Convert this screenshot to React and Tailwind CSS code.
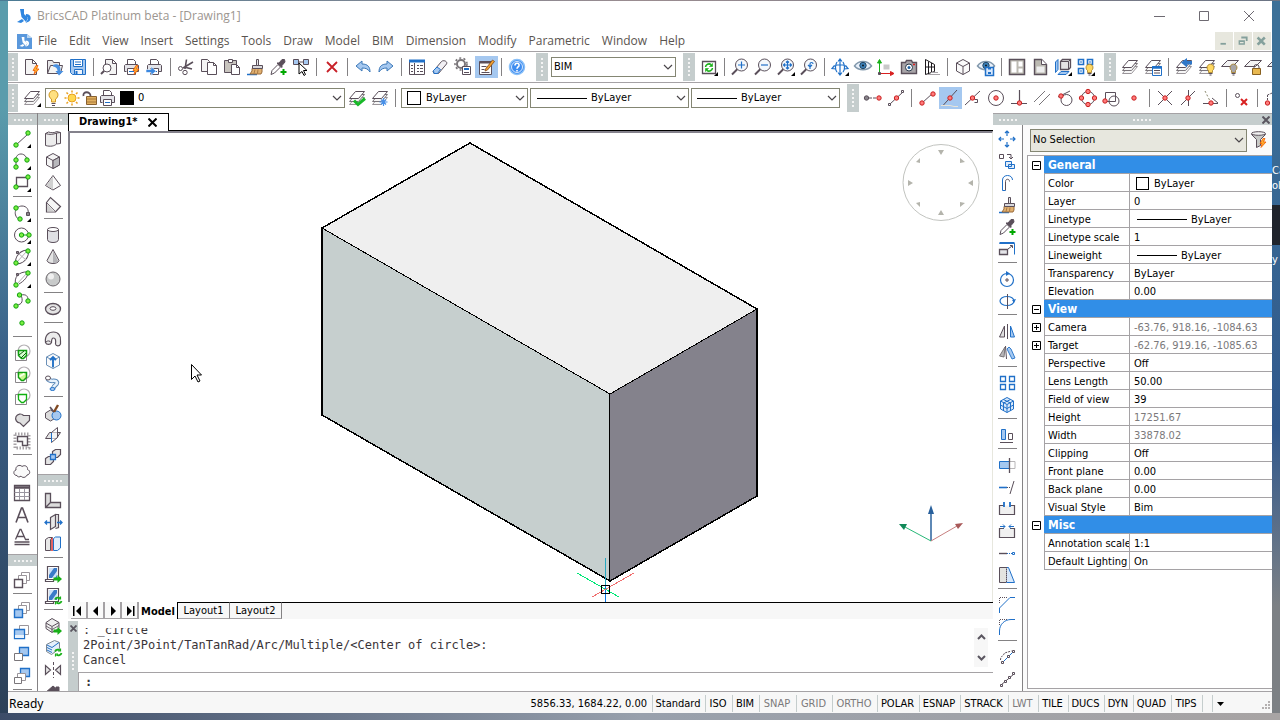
import { useState } from "react";

const INK = "#5a4f5a";
const BLUE = "#2070c8";
const SKY = "#a5c8f0";

// ---- small parts shared by many icons ----

const Green = ({ x, y }) => <circle cx={x} cy={y} r="2.2" fill="#7bef42" stroke="#10a010" />;
const Red = ({ x, y }) => <circle cx={x} cy={y} r="2.2" fill="#ff7b7b" stroke="#c82020" />;
const Corner = () => <path d="M20 16v4h-4z" fill="#000" stroke="none" />;
const Bolt = () => <path d="M15 9.500l-3 5h2l-1 4 5-5.500h-2.500l1.500-3.500z" fill="#ffb030" stroke="#f05a00" strokeWidth=".8" />;
const Page = () => <path d="M4.5 3.500h7l4 4v11h-11zM11.500 3.500v4h4" fill="#f4f4f4" />;
const Printer = () => (
  <>
    <path d="M6.500 8V3.500h6l2 2V8" fill="#fff" />
    <path d="M3.500 15.500v-6l1-1h12l1 1v6h-3" fill="#e4e4e8" />
    <path d="M3.500 15.500h2" />
    <path d="M6.500 12.500h8v6h-8z" fill="#fff" />
    <path d="M8 15.500h5" stroke={BLUE} />
  </>
);
const Sheets = () => (
  <>
    <path d="M3.500 17.500l6-7h9l-6 7z" fill="#f6f6f6" stroke="#9a959a" />
    <path d="M3.500 14.500l6-7h9l-6 7z" fill="#f6f6f6" stroke="#7a757a" />
    <path d="M3.500 11.500l6-7h9l-6 7z" fill="#fff" />
  </>
);
const OneSheet = () => <path d="M2.500 10.500l6-6h11l-6 6z" fill="#f4f4f4" />;
const Lens = ({ children }) => (
  <>
    <path d="M8.500 13L3 18.500" strokeWidth="2" />
    <circle cx="12.500" cy="9" r="6" fill="#f4f8fc" />
    <g stroke={BLUE} strokeWidth="1.200">{children}</g>
  </>
);
const Brush = () => (
  <>
    <path d="M3 18.500h10" stroke={BLUE} strokeWidth="1.500" />
    <path d="M8 12.500h10v3.500l-1 2H6l2-3z" fill="#e0b070" stroke="#9a6a38" />
    <path d="M11 13.500l-1 4M14 13.500l-.5 4" stroke="#9a6a38" strokeWidth=".8" />
    <path d="M8.500 9.500h10v3h-10z" fill="#d8d8dc" />
    <path d="M12.500 3.500h2v6h-2z" fill="#e8e8e8" />
  </>
);
const Dropper = () => (
  <>
    <path d="M4 18.500l1-4 6-6 2.500 2.500-6 6z" fill="#fff" />
    <path d="M10 7l2 0 3-3.500 2.500 0 .5 2.500-3 3.500v2z" fill={INK} />
    <path d="M16.500 13v6M13.500 16h6" stroke="#00a800" strokeWidth="2" />
  </>
);
const Cube = ({ fill = "#fafafa" }) => (
  <>
    <path d="M11 3.500l6.500 3.500v8L11 18.500 4.500 15V7z" fill={fill} />
    <path d="M4.500 7L11 10.500 17.500 7M11 10.500v8" />
  </>
);
const Bulb = ({ fill }) => (
  <>
    <path d="M12.500 14.500a3.500 3.500 0 1 1 4 0v2h-4z" fill={fill} stroke="#a07820" strokeWidth=".8" />
    <path d="M12.500 17.500h4M13.500 19h2" strokeWidth="1.200" />
  </>
);
const EyeShape = () => (
  <>
    <path d="M2.500 10c4-6 13-6 17 0-4 5-13 5-17 0z" fill="#e8f0fa" stroke="#8298ac" strokeWidth="1.500" />
    <circle cx="11" cy="9.500" r="3.200" fill="#3c80b8" stroke="#204868" />
    <circle cx="11" cy="9.500" r="1" fill="#101820" stroke="none" />
  </>
);
const Recycle = () => (
  <g stroke="#18b018" strokeWidth="1.800">
    <path d="M13 14.500a3 3 0 0 1 5-1M19.500 16a3 3 0 0 1-5 1.500" />
    <path d="M18.500 11.500v2.500H16M13.500 19.500v-2.500H16" strokeWidth="1.200" />
  </g>
);
const GreenArrow = () => <path d="M11.500 14.500h4v-2.500l4.500 4-4.500 4v-2.500h-4z" fill="#18b018" stroke="none" />;
const WindowFrame = () => (
  <>
    <path d="M5.500 3.500h11v13h-11z" fill="#fff" strokeWidth="1.200" />
    <path d="M7 5h8v10H7z" fill="#3a7ac8" stroke="none" />
    <path d="M7 5h5l-5 7zM15 8v4l-2 3h-3z" fill="#cfe2f8" stroke="none" />
    <path d="M3.500 16.500h8v2h-8z" fill="#fff" strokeWidth="1.200" />
  </>
);
const Squares = ({ front, back }) => (
  <>
    <path d="M10.500 3.500h8v8h-8z" fill={back ? SKY : "#fff"} stroke={back ? BLUE : "#9a959a"} />
    <path d="M7.500 6.500h8v8h-8z" fill="#fff" stroke="#9a959a" />
    <path d="M3.500 10.500h8v8h-8z" fill={front ? SKY : "#fff"} stroke={front ? BLUE : INK} strokeWidth="1.400" />
  </>
);
const HatchFrame = ({ children }) => (
  <>
    <circle cx="13" cy="9" r="6" stroke="#b4b0b4" strokeWidth="1.200" />
    <path d="M4.500 8.500h11v10h-11z" stroke="#8a868a" />
    {children}
  </>
);

const ICONS = {
  new: <><Page /><Bolt /></>,
  open: (
    <>
      <path d="M3.500 17.500v-13h5l1 2h6v3" fill="#e8e8ea" />
      <path d="M3.500 17.500l3-8h12l-2 8z" fill="#f4f4f4" />
      <path d="M9 9c5-2 8 1 7.500 6h3l-4.500 4.500-3.500-4.500h2c0-2-1-4-4.500-4.500z" fill="#4a90e0" stroke="none" />
    </>
  ),
  save: (
    <>
      <path d="M3.500 3.500h15v15h-13l-2-2z" fill={SKY} stroke={BLUE} />
      <path d="M6.500 3.500h9v7h-9z" fill="#fff" stroke={BLUE} />
      <path d="M7.500 13.500h8v5h-8z" fill="#eef4fc" stroke={BLUE} />
      <path d="M8 6h6M8 8.500h6" stroke={BLUE} />
      <path d="M9.500 15v3" stroke={BLUE} strokeWidth="2" />
    </>
  ),
  preview: <><path d="M7.500 10V3.500h7l4 4v11h-7M14.500 3.500v4h4" fill="#f4f4f4" /><circle cx="9" cy="12" r="4" fill="#fff" /><path d="M6 15l-3 3" strokeWidth="2" /></>,
  print: <><Printer /><Bolt /></>,
  export: <><Printer /><path d="M2 13.500h5v-3l5 4.500-5 4.500v-3H2z" fill="#3c88e0" stroke="#fff" strokeWidth=".6" /></>,
  cut: <><path d="M11.500 3.500L10 13M18 6L8 12" strokeWidth="1.600" /><circle cx="5.500" cy="12.500" r="2" /><circle cx="10" cy="16.500" r="2.200" /><path d="M11 11.500l6 1.500" strokeWidth="1.600" /></>,
  copy: <><path d="M3.500 3.500h6l2 2v10h-8z" fill="#f4f4f4" /><path d="M9.500 6.500h6l3 3v9h-9zM15.500 6.500v3h3" fill="#fff" /></>,
  paste: <><path d="M3.500 4.500h12v12h-12z" fill="#c8c4be" /><path d="M7.500 3.500h4v3h-4z" fill="#fff" /><path d="M10.500 8.500h5l3 3v7h-8zM15.500 8.500v3h3" fill="#fff" /></>,
  brush: <Brush />,
  dropper: <Dropper />,
  pick: <><path d="M3.500 3.500h5v5h-5zM13.500 3.500h5v5h-5z" fill={SKY} /><path d="M8.500 6h5" /><path d="M9 7v11l3-2.500 2 4 1.500-1-2-4h3.500z" fill="#fff" stroke="#000" /></>,
  erase: <path d="M6 6l10 10M16 6L6 16" stroke="#c82028" strokeWidth="1.800" />,
  undo: <path d="M4 10l6-5v3c6 0 8 3 8 8-2-3-4-4-8-4v3z" fill={SKY} stroke="#3c78b8" />,
  redo: <path d="M18 10l-6-5v3c-6 0-8 3-8 8 2-3 4-4 8-4v3z" fill={SKY} stroke="#3c78b8" />,
  properties: <><path d="M3.500 4.500h15v14h-15z" fill="#fff" /><path d="M3 5h16" stroke={BLUE} strokeWidth="3" /><path d="M8.500 7v11" /><path d="M5 9.500h2M5 12.500h2M5 15.500h2M11 9.500h2m1 0h3M11 12.500h2m1 0h3M11 15.500h2m1 0h3" /></>,
  eraser: <><path d="M4 15.500l8.500-10c2-2 6.500 0 5 2.500l-8 9.500H5z" fill="#f2f0f4" /><path d="M4.500 14.500l3.500-3.500 3.500 2.500-3 4H5z" fill={SKY} stroke={BLUE} /></>,
  gear: <><circle cx="9" cy="8" r="4" stroke="#7a767a" strokeWidth="2" fill="#fff" /><circle cx="9" cy="8" r="6" stroke="#7a767a" strokeWidth="1.600" strokeDasharray="2 2.300" /><path d="M10.500 10.500h8v8h-8z" fill="#fff" /><path d="M12 13h5" stroke={BLUE} strokeWidth="2" /><path d="M12 16.500h5" /></>,
  edit: <><path d="M4.500 5.500h12v13h-12z" fill="#fff" /><path d="M4.500 6.500h12" strokeWidth="2" /><path d="M6.500 10.500h5M6.500 13.500h3M6.500 16.500h8" /><path d="M10.500 13l7-9 2 1.500-7 8.500-2.500 1z" fill="#f0a030" stroke="#804818" strokeWidth=".8" /></>,
  help: <><circle cx="11" cy="11" r="7.500" fill="#3c8cf0" stroke="#8ac0f8" strokeWidth="1.500" /><circle cx="11" cy="11" r="5.500" stroke="#fff" strokeWidth=".8" /><path d="M9 9.500c0-3 4.500-3 4 0-.3 1.500-2 1.500-2 3.300M11 14v1.500" stroke="#fff" strokeWidth="1.600" /></>,

  regen: <><path d="M4.500 5.500h13v12h-13z" fill="#fff" strokeWidth="1.300" /><path d="M7.500 11a3.500 3.500 0 0 1 5.500-2.500M14.500 12a3.500 3.500 0 0 1-5.500 2.500" stroke="#18b018" strokeWidth="1.600" /><path d="M14.500 7.500v3h-3zM7.500 15.500v-3h3z" fill="#18b018" stroke="#18b018" strokeWidth=".6" /><Corner /></>,
  zoomIn: <Lens><path d="M9 9h7M12.500 5.500v7" /></Lens>,
  zoomOut: <Lens><path d="M9 9h7" /></Lens>,
  zoomAll: <><Lens><path d="M8.500 9h8M12.500 5v8M10 7.500L8.500 9l1.500 1.500M15 7.500L16.500 9 15 10.500M11 6.500L12.500 5 14 6.500M11 11.500l1.500 1.500 1.500-1.500" /></Lens><Corner /></>,
  zoomPrev: <Lens><path d="M12 13V8c0-2 3-2 3 0M10 9l2 2 2-2" /></Lens>,
  orbit: <><g stroke={BLUE} strokeWidth="1.200"><path d="M11 3v16M3 12.500c3-5 13-5 16 0M9 5.500L11 3l2 2.500M9 16.500l2 2.500 2-2.500M5.500 9.500L3 12.500l4 .5M16.500 9.500l2.500 3-4 .5M8 6c-2 3-2 8 0 10M14 6c2 3 2 8 0 10" /></g><Corner /></>,
  eye: <EyeShape />,
  ucs: <><path d="M8.500 8.500h6v5h-6z" fill="#c8c8c8" stroke="none" /><path d="M4.500 16V5M2.500 7l2-3.500L6.500 7z" stroke="#18b018" fill="#18b018" /><path d="M6 17.500h12M15.500 15.500l3.500 2-3.500 2z" stroke="#d82020" fill="#d82020" /><path d="M3.500 16.500h2v2h-2z" fill={INK} /></>,
  camera: <><path d="M3.500 6.500h4l1-2h5l1 2h4v11h-15z" fill="#a8a4a8" strokeWidth="1.400" /><circle cx="11" cy="11.500" r="3.500" fill="#fff" stroke="#283848" /><circle cx="11" cy="11.500" r="1.500" fill="#2060a0" stroke="none" /><path d="M15 8.500h2" stroke="#e02020" strokeWidth="1.500" /></>,
  frustum: <><path d="M4.500 3.500v15l9-3v-7zM4.500 11h9M7.500 5.500v12M10.500 7v9.500" stroke="#1c181c" /><path d="M6 18.500h13M10 16.500h7" stroke="#a8a4a8" /></>,
  cube: <Cube />,
  eyeSave: <><EyeShape /><path d="M10.500 11.500h8v8h-8z" fill="#d8e8fc" stroke={BLUE} strokeWidth="1.500" /><path d="M13 12.500h3M13 17h3" stroke={BLUE} strokeWidth="2" /></>,
  viewports: <><path d="M3.500 3.500h15v15h-15z" fill="#bcbab2" strokeWidth="1.500" /><path d="M5.500 5.500h5v11h-5zM12.500 5.500h4v5h-4zM12.500 12.500h4v4h-4z" fill="#fff" stroke="none" /></>,
  layout: <><path d="M5.500 3.500h7l5 5v10h-12z" fill="#bcbab2" strokeWidth="1.400" /><path d="M12.500 3.500v5h5" fill="#fff" /><path d="M7.500 10.500h8v6h-8z" fill="#eee" stroke="none" /></>,
  sections: <><path d="M8.500 5.500l2-2h8v8l-2 2h-8z" fill="#e4e2e4" strokeWidth="1.300" /><path d="M8.500 5.500h8v8M16.500 5.500l2-2" /><path d="M3.500 6l2.500-2.500v10l-2.500 3z" fill={SKY} stroke={BLUE} /><path d="M6 18.500l3-3h8l-3 3z" fill={SKY} stroke={BLUE} /><Corner /></>,
  gridLight: <><path d="M3.500 3.500h5v5h-5zM12.500 3.500h5v5h-5zM3.500 12.500h5v5h-5z" fill="#fff" stroke={BLUE} strokeWidth="1.600" /><path d="M5 6h2M14 6h2M5 15h2" stroke={BLUE} /><Bulb fill="#ffd860" /><Corner /></>,

  layers: <Sheets />,
  layersDrop: <><Sheets /><Corner /></>,
  layerProps: <><Sheets /><path d="M10.500 10.500h9v9h-9z" fill="#fff" stroke={BLUE} /><path d="M10 11.500h10" stroke={BLUE} strokeWidth="2.500" /><path d="M12 14.500h6M12 17h6" /></>,
  layerPrev: <><Sheets /><path d="M19 9.500h-5v3l-6-5 6-4.500v3h5z" fill="#3078c8" stroke="none" transform="translate(0 -1)" /></>,
  layerOn: <><Sheets /><Bulb fill="#ffd860" /></>,
  layerOff: <><OneSheet /><Bulb fill="#a8a6a8" /></>,
  layerLock: <><OneSheet /><path d="M12 13v-2a2.500 2.500 0 0 1 5 0v2" /><path d="M10.500 12.500h8v6h-8z" fill="#e8b850" stroke="#886020" /></>,
  layerUnlock: <OneSheet />,
  layerCheck: <><Sheets /><path d="M8 13.500l4 4 7-6" stroke="#18b828" strokeWidth="3" /></>,
  layerFreeze: <><Sheets /><path d="M14.500 11v8M10.500 15h8M12 12.500l5 5M17 12.500l-5 5" stroke="#4890e8" strokeWidth="1.200" /></>,

  snapFrom: <><path d="M7 11h9" strokeDasharray="3 1" /><circle cx="4.500" cy="11" r="2.200" fill="#88848a" /><Red x={17} y={11} /></>,
  snapMid2: <><path d="M5 17L18 5" /><path d="M3.500 16.500h2v2h-2zM16.500 3.500h2v2h-2z" fill="#fff" /><Red x={11.500} y={11} /></>,
  snapEnd: <><path d="M6 16L17 6" /><Red x={6} y={16} /><Red x={17} y={7} /></>,
  snapMid: <><path d="M4 18.500L18 3" /><Red x={11} y={11} /><path d="M2 18.500h9l4 1h4" stroke="#e8e4d8" /></>,
  snapNear: <><path d="M3 18L18 4" /><path d="M12.500 12.500h3v3h-3" /><Red x={10.500} y={11} /></>,
  snapCenter: <><circle cx="11" cy="11" r="7.500" /><Red x={11} y={11} /></>,
  snapPerp: <><path d="M11.500 3v12M3 16.500h16" strokeWidth="1.200" /><Red x={11.500} y={16} /></>,
  snapParallel: <path d="M3 15L14 4M8 18L19 7" stroke="#7a767a" />,
  snapTangent: <><circle cx="12.500" cy="13" r="5.500" /><path d="M4 10l12-6" /><Red x={7} y={9} /></>,
  snapQuad: <><circle cx="11" cy="11" r="6.500" /><Red x={11} y={4.500} /><Red x={11} y={17.500} /><Red x={4.500} y={11} /><Red x={17.500} y={11} /></>,
  snapIns: <><path d="M5.500 5.500h10v9h-10z" /><circle cx="14" cy="14" r="5" /><Red x={5} y={14} /></>,
  snapNode: <Red x={11} y={11} />,
  snapInt: <><path d="M4 4l14 14M18 4L4 18" /><Red x={11} y={11} /></>,
  snapApp: <><path d="M11.500 3v16M4 18L18 4" /><Red x={11} y={11} /></>,
  snapExt: <><path d="M5 4l5 10" strokeDasharray="2 2" stroke="#88866a" /><path d="M3 16.500h15M12 11l6 5" /><Red x={11} y={16} /></>,
  snapOff: <><circle cx="6.500" cy="8.500" r="2" /><path d="M10 12l6 6M16 12l-6 6" stroke="#d82020" strokeWidth="2" /></>,
  snapTrack: <><path d="M5.500 8l7-3M5.500 8v8" strokeDasharray="2 1" /><Red x={5.500} y={16} /></>,

  line: <><path d="M5 17L17 6" /><Green x={5} y={17} /><Green x={17} y={5} /><Corner /></>,
  polyline: <><path d="M5 17v-8c0-7 11-7 11 2" /><Green x={5} y={17} /><Green x={5} y={10} /><Green x={16} y={10} /><Corner /></>,
  rect: <><path d="M5.500 5.500h11v9h-11z" strokeWidth="1.300" /><Green x={5} y={15} /><Green x={17} y={5} /><Corner /></>,
  arc: <><path d="M9 18c-8-4-5-14 2-14 5 0 7 4 6 8" /><Green x={5} y={6} /><Green x={9} y={17} /><path d="M15.500 10.500h3v3h-3z" fill="#8a868a" /><Corner /></>,
  circle: <><circle cx="10.500" cy="11" r="7" /><path d="M11 11h7" stroke="#10a010" /><Green x={10.500} y={11} /><Green x={18} y={11} /><Corner /></>,
  ellipse: <><ellipse cx="11" cy="11" rx="8" ry="4.500" transform="rotate(-48 11 11)" /><path d="M6 16l10-11M7 7l8 7" stroke="#b4b0b4" /><Green x={5} y={17} /><Green x={17} y={5} /><path d="M5.500 5.500h2v2h-2z" fill="#8a868a" /><Corner /></>,
  ellipseArc: <><path d="M17 4c-9-1-15 6-12 13M17 4c0 5-4 9-9 12" /><path d="M6 16L16 5" stroke="#b4b0b4" /><Green x={5} y={17} /><Green x={17} y={5} /><path d="M5.500 5.500h2v2h-2z" fill="#8a868a" /><Corner /></>,
  spline: <><path d="M5 15c7 0 7-5 5-10 5-1 7 1 7 5" /><Green x={5} y={16} /><Green x={8.500} y={5} /><Green x={17} y={11} /></>,
  point: <Green x={11} y={11} />,
  hatch: <HatchFrame><path d="M7.500 8.500h8v5l-3 3h-2l-3-3z" fill="#d8ffd0" stroke="#10a010" strokeWidth="1.500" /><path d="M8 13l5-4M10 16l5-5" stroke="#106010" /></HatchFrame>,
  gradient: <HatchFrame><path d="M7.500 8.500h8v5l-3 3h-2l-3-3z" fill="#c8f890" stroke="#10a010" strokeWidth="1.500" /><path d="M8.500 12.500l5-3" stroke="#f4ffe8" strokeWidth="2" /></HatchFrame>,
  boundary: <HatchFrame><path d="M7.500 8.500h8v5l-3 3h-2l-3-3z" fill="#fff" stroke="#10b010" strokeWidth="1.300" /></HatchFrame>,
  region: <path d="M12.500 7.500h6v5l-6 6-3.500-3.500a4.500 4.500 0 1 1 3.500-7.500z" fill="#e0e0e0" strokeWidth="1.200" />,
  wipeout: <><path d="M4 4h14v14H4z" strokeDasharray="1.500 1.500" stroke="#a8a4a8" strokeWidth="3" /><path d="M6.500 6.500h10v9h-5v-4h-5z" fill="#f8f8f8" strokeWidth="1.400" /></>,
  cloud: <path d="M6 15.500c-4 0-4-5-1-5.500-1-4 4-6 6-3.500 3-2 6 0 5.500 3 3 1 3 5-.5 5.500-1 3-5 3-6 1-1 1.500-4 1-4-.5z" fill="#fafafa" />,
  table: <><path d="M3.500 3.500h15v15h-15z" fill="#fff" strokeWidth="1.300" /><path d="M3.500 5.500h15" strokeWidth="2.500" /><path d="M3.500 10.500h15M3.500 14.500h15M8.500 7v11M13.500 7v11" stroke="#9a96a0" /></>,
  text: <path d="M5 18.500L10.500 4h1L17 18.500M7 13.500h8" strokeWidth="1.600" />,
  mtext: <path d="M4.500 13.500L9 3.500h1l4.500 10M6 10.500h7M14 13.500h4M3.500 16h15M3.500 18.500h15" strokeWidth="1.300" />,
  order: <Squares />,
  orderFront: <Squares front />,
  orderAbove: <><path d="M8.500 4.500h9v9h-9z" stroke="#9a959a" /><path d="M3.500 8.500h10v9h-10z" fill={SKY} stroke={BLUE} strokeWidth="1.300" /><path d="M4 15.500h9" stroke="#e8f2fc" strokeWidth="3" /></>,
  orderUnder: <><path d="M8.500 4.500h9v8h-9z" fill={SKY} stroke={BLUE} strokeWidth="1.300" /><path d="M3.500 10.500h8v7h-8z" fill="#fff" stroke="#7a767a" /></>,
  orderBack: <><path d="M9.500 3.500h9v8h-9z" fill={SKY} stroke={BLUE} strokeWidth="1.300" /><path d="M6.500 8.500h8v7h-8z" fill="#fff" stroke="#9a959a" /><path d="M3.500 12.500h7v6h-7z" fill="#fff" stroke="#7a767a" /></>,

  polysolid: <><path d="M3.500 5.500l3-1.500c3 1 6 1 8-.5l4 1v11l-4 .5c-2 2-6 3-11 1.500z" fill="#ececec" /><path d="M3.500 5.500c4 1.500 8 1 11-.5l4-.5M14.500 5v11" /></>,
  solidBox: <><Cube fill="#f4f4f4" /><path d="M11 10.500L17.500 7v8L11 18.500z" fill="#b8b8bc" /></>,
  pyramid: <><path d="M11 3.500l7.500 10-7.500 4.500-7.500-4.500z" fill="#fafafa" /><path d="M11 4v13.500l-6.500-4z" fill="#d0d0d0" stroke="none" /></>,
  wedge: <><path d="M4.500 8.500l4-5 10 9-5 5.500h-9z" fill="#f6f6f6" strokeWidth="1.200" /><path d="M4.500 8.500l9 9" strokeWidth=".8" /><path d="M5 10l7.500 7.500H5z" fill="#d0d0d0" stroke="none" /></>,
  cylinder: <><path d="M5.500 5.500v10c0 4 11 4 11 0v-10" fill="#e0e0e4" /><ellipse cx="11" cy="5.500" rx="5.500" ry="2" fill="#fff" /></>,
  cone: <><path d="M11 3.500l6 11c-1 4-11 4-12 0z" fill="#e4e4e4" /><path d="M11 5v12c3 0 5-1 5-2z" fill="#b4b4b8" stroke="none" /></>,
  sphere: <><circle cx="11" cy="11" r="7" fill="#c8caca" stroke="#6a656a" /><circle cx="9" cy="8.500" r="3" fill="#f0f0f0" stroke="none" /></>,
  torus: <><ellipse cx="11" cy="11" rx="7.500" ry="5.500" fill="#e4e4e4" strokeWidth="1.300" /><ellipse cx="11" cy="10.500" rx="3" ry="1.800" fill="#fff" /></>,
  sweep: <><path d="M3.500 14.500c-1-7 3-10.500 8-10.500 5 0 7.500 4 7 9v3c-1 2.500-4.500 2.500-5 0 .5-4 0-6-2-6s-2 2-2 4.500c-1 2.500-5 2.500-6 0z" fill="#ececec" strokeWidth="1.200" /><path d="M4 14c1.500-1.500 4-1.500 5 .5" /></>,
  extrude: <><g stroke="#6a90b8"><Cube /></g><path d="M11 17V7M8 10l3-3 3 3" stroke={BLUE} strokeWidth="1.800" /></>,
  loft: <><path d="M5.500 6.500c3 5 8 0 9.500 4 0 3-3 2-4 6" stroke="#5a88b8" strokeWidth="4.500" /><path d="M5.500 6.500c3 5 8 0 9.500 4 0 3-3 2-4 6" stroke="#e8f2fc" strokeWidth="2.500" /><ellipse cx="6" cy="6" rx="2.500" ry="2" fill="#fff" /><ellipse cx="10.500" cy="17" rx="2.500" ry="1.500" fill={SKY} stroke={BLUE} /></>,
  subtract: <><path d="M3.500 11l5-3 5 3v5l-5 3-5-3z" fill="#dcdcdc" /><circle cx="14.500" cy="13.500" r="4.500" fill={SKY} stroke={BLUE} /><path d="M8 5l4 5" strokeWidth="1.600" /><path d="M16 3l-4 7" stroke="#804820" strokeWidth="2.400" /></>,
  slice: <><path d="M3.500 14.500l4-6h11l-4 6z" fill="#e4e4e4" /><path d="M9.500 8.500l6-5v10l-6 5z" fill="#fff" fillOpacity=".6" /><path d="M9.500 9v9" stroke={BLUE} /></>,
  union: <><path d="M3.500 12.500l3-2h5v5l-3 3h-5zM10.500 5.500l3-2h5v5l-3 3h-5z" fill="#e4e4e4" strokeWidth="1.200" /><path d="M8.500 8.500h5v5h-5z" stroke={BLUE} strokeWidth="1.300" fill={SKY} /></>,
  wall: <path d="M3.500 4.500h5v9h10v5h-15zM3.500 18.500l5-5" fill="#dcdcdc" strokeWidth="1.300" />,
  pushPull: <><path d="M8.500 6.500l5-3v12l-5 3zM13.500 3.500h3v13l-3 1" fill="#e8e8e8" strokeWidth="1.200" /><path d="M3 11.500h5M15 11.500h5M5 9.500l-2 2 2 2M18 9.500l2 2-2 2" stroke={BLUE} strokeWidth="1.300" /></>,
  split: <><path d="M3.500 6.500l3-2h4l-2 2v11h-5z" fill="#e8e8e8" /><path d="M11.500 5.500l2-1.500h5v11l-3 2.500h-4z" fill="#e4effb" stroke={BLUE} /><path d="M10 5v13" stroke="#d82020" strokeWidth="1.400" /></>,
  window: <><WindowFrame /><GreenArrow /></>,
  windowUpdate: <><WindowFrame /><Recycle /></>,
  blockOut: <><path d="M10 3.500l7 4v6l-7 4-6-4v-6z" fill="#f0f0f0" /><path d="M4 8l6 3.500 7-4M10 12v5" /><path d="M4 11l6 3.500 7-4" strokeWidth=".8" /><GreenArrow /></>,
  blockSync: <><path d="M4.500 7.500l8-4 5 2v6l-8 6-5-3z" fill="#e4effb" stroke="#7a858f" /><path d="M5 8l5 2.500 7-5M5 10.500l5 2.500M5 13l5 2.500" stroke={BLUE} /><Recycle /></>,
  flip: <><path d="M3.500 6.500v9l5-4.500zM18.500 6.500v9l-5-4.500z" fill="#e8e8e8" strokeWidth="1.200" /><path d="M11.500 3v16" strokeDasharray="3 2" /></>,
  roof: <path d="M3 12l8-7 3 2.500V6h3v4l3 3H3z" fill={INK} />,

  move: <path d="M11 3v5M11 14v5M3 11h5M14 11h5M9 5l2-2 2 2M9 17l2 2 2-2M5 9l-2 2 2 2M17 9l2 2-2 2" stroke={BLUE} strokeWidth="1.200" />,
  duplicate: <><path d="M3.500 4.500h4v4h-4zM11 4.500h4v4M13 7l2 2 2-2" /><path d="M9.500 11.500h6v5h-6zM12.500 14.500h6v4h-6z" fill="#e0ecfa" stroke={BLUE} /></>,
  offset: <><path d="M6.500 18.500V8c0-6 10-6 10 0" stroke={BLUE} /><path d="M9.500 18.500v-9c0-3 4-3 4 0" /><path d="M6.500 18.500h3" stroke={BLUE} /></>,
  resize: <><path d="M3.500 5.500h15v11" stroke={BLUE} /><path d="M3.500 5h15" stroke={BLUE} strokeWidth="2" /><path d="M3.500 11.500h8v5h-8z" fill="#e4e4e8" strokeWidth="1.300" /><path d="M12 11l4-3M14 7.500h2.500V10" /></>,
  rotate: <><circle cx="11" cy="12" r="6.500" stroke={BLUE} strokeWidth="1.200" /><path d="M10 3l4 2.500-4 2.500z" fill={BLUE} stroke="none" /><path d="M10 11h2v2h-2z" /></>,
  rotate3d: <><ellipse cx="11" cy="11" rx="7" ry="4.500" stroke={BLUE} strokeWidth="1.200" /><path d="M11.500 4v15" /><path d="M16 10l4-1-2 4z" fill={BLUE} stroke="none" /></>,
  mirror: <><path d="M8.500 6v11h-5z" fill="#e0e0e0" /><path d="M11.500 4v15" /><path d="M14.500 6v11h4z" fill={SKY} stroke={BLUE} /></>,
  mirror3d: <><path d="M9 5L3.500 14l4.500 1z" fill="#b8b6b8" stroke="#7a767a" /><path d="M9.500 4l1 13" /><path d="M11 7l5 10 3-1-4-9-2-2z" fill={SKY} stroke={BLUE} strokeWidth=".9" /></>,
  array: <path d="M4.500 4.500h5v5h-5zM13.500 4.500h5v5h-5zM4.500 12.500h5v5h-5zM13.500 12.500h5v5h-5z" fill="#fff" stroke={BLUE} strokeWidth="1.300" />,
  array3d: <><g stroke={BLUE}><Cube fill="#d8e8fa" /><path d="M7.500 5.500l7 3.500v8M14.500 5.500l-7 3.500v8M4.500 11l6.500 3.500 6.500-3.500" /></g></>,
  align: <><path d="M5.500 5.500h4v10h-4z" fill={SKY} stroke={BLUE} /><path d="M12.500 9.500h4v6h-4z" /><path d="M4 18.500h13" /></>,
  trimBox: <><path d="M3.500 7.500h10v7h-10z" fill={SKY} stroke={BLUE} /><path d="M14 7.500h5v7h-5" stroke="#b8b6b8" /><path d="M13.500 4v15" strokeWidth="1.300" /></>,
  extend: <><path d="M3 11.500h8" stroke={BLUE} strokeWidth="1.600" /><path d="M11 11.500h4" strokeDasharray="1 1" /><path d="M18 5l-4 13" /></>,
  breakAt: <><path d="M8 7.500H3.500v9h15v-9H14" fill="#f0f0f0" strokeWidth="1.200" /><path d="M8 4v5M14 4v5" stroke={BLUE} strokeWidth="1.800" /></>,
  join: <><path d="M8 8.500H3.500v9h15v-9H14" fill="#f0f0f0" strokeWidth="1.200" /><path d="M4 6.500h5M18 6.500h-5M7 4.500l2 2-2 2M15 4.500l-2 2 2 2" stroke={BLUE} /></>,
  lengthen: <><path d="M3 11.500h8" strokeWidth="1.400" /><path d="M11 11.500h5" strokeDasharray="1 1" stroke={BLUE} /><path d="M16.500 10.500h2v2h-2z" stroke={BLUE} /></>,
  stretch: <><path d="M3.500 3.500h7v15h-7z" fill="#e4e4e0" /><path d="M10.500 3.500h2l6 15h-8" fill="#d8e8fa" stroke={BLUE} /><path d="M10.500 3v16" strokeDasharray="1 1" /></>,
  chamfer: <><path d="M3.500 9V3.500h8" strokeDasharray="1 1" /><path d="M3.500 19v-5L14 3.500h5" stroke={BLUE} /></>,
  fillet: <><path d="M3.500 9V3.500h8" strokeDasharray="1 1" /><path d="M3.500 19v-4C3.500 8 9 3.500 15 3.500h4" stroke={BLUE} /></>,
  pline1: <><path d="M4.500 14c0-4 3-4 4-7l7-2" strokeDasharray="2 1" /><path d="M6 17l12-12" stroke={BLUE} /><path d="M5.500 15.500h2v2h-2zM11.500 9.500h2v2h-2zM16.500 4.500h2v2h-2z" fill="#fff" /></>,
  pline2: <><path d="M5 17l13-11" /><path d="M4.500 16.500h2v2h-2zM8.500 12.500h2v2h-2zM12.500 8.500h2v2h-2zM16.500 4.500h2v2h-2z" fill="#fff" /></>,
};

function Glyph({ name }) {
  return (
    <svg width="23" height="22" viewBox="0 0 23 22" fill="none" stroke={INK} className="block">
      {ICONS[name]}
    </svg>
  );
}

const DRAWING_TOOLS = [
  ["new", "open", "save"],
  ["preview", "print", "export"],
  ["cut", "copy", "paste", "brush", "dropper", "pick"],
  ["erase"],
  ["undo", "redo"],
  ["properties", "eraser", "gear", "edit"],
  ["help"],
];
const VIEW_TOOLS = [
  ["regen"],
  ["zoomIn", "zoomOut", "zoomAll", "zoomPrev"],
  ["orbit", "eye", "ucs", "camera", "frustum"],
  ["cube", "eyeSave"],
  ["viewports", "layout", "sections", "gridLight"],
];
const LAYER_TOOLS = [
  ["layers", "layerProps"],
  ["layerPrev", "layerOn", "layerOff", "layerLock", "layerUnlock"],
];
const SNAP_TOOLS = [
  ["snapFrom", "snapMid2"],
  ["snapEnd", "snapMid", "snapNear", "snapCenter", "snapPerp", "snapParallel", "snapTangent", "snapQuad", "snapIns", "snapNode"],
  ["snapInt", "snapApp", "snapExt"],
  ["snapOff"],
  ["snapTrack"],
];
const DRAW_TOOLS = [
  ["line", "polyline", "rect"],
  ["arc", "circle", "ellipse", "ellipseArc", "spline", "point"],
  ["hatch", "gradient", "boundary", "region", "wipeout"],
  ["cloud", "table", "text", "mtext"],
];
const ORDER_TOOLS = [["order"], ["orderFront", "orderAbove", "orderUnder", "orderBack"], []];
const SOLID_TOOLS = [
  ["polysolid", "solidBox", "pyramid", "wedge"],
  ["cylinder", "cone", "sphere"],
  ["torus"],
  ["sweep", "extrude", "loft"],
  ["subtract", "slice", "union"],
];
const BIM_TOOLS = [
  ["wall", "pushPull", "split"],
  ["window", "windowUpdate"],
  ["blockOut", "blockSync", "flip", "roof"],
];
const MODIFY_TOOLS = [
  ["move", "duplicate", "offset", "brush", "dropper", "resize"],
  ["rotate", "rotate3d"],
  ["mirror", "mirror3d"],
  ["array", "array3d"],
  ["align"],
  ["trimBox", "extend", "breakAt", "join", "lengthen", "stretch"],
  ["chamfer", "fillet"],
  ["pline1", "pline2"],
];

const MENUS = ["File", "Edit", "View", "Insert", "Settings", "Tools", "Draw", "Model", "BIM", "Dimension", "Modify", "Parametric", "Window", "Help"];

const PROPERTIES = [
  {
    title: "General",
    rows: [
      { name: "Color", value: "ByLayer", swatch: true },
      { name: "Layer", value: "0" },
      { name: "Linetype", value: "ByLayer", line: "w-[50px]" },
      { name: "Linetype scale", value: "1" },
      { name: "Lineweight", value: "ByLayer", line: "w-10" },
      { name: "Transparency", value: "ByLayer" },
      { name: "Elevation", value: "0.00" },
    ],
  },
  {
    title: "View",
    rows: [
      { name: "Camera", value: "-63.76, 918.16, -1084.63", muted: true, expand: true },
      { name: "Target", value: "-62.76, 919.16, -1085.63", muted: true, expand: true },
      { name: "Perspective", value: "Off" },
      { name: "Lens Length", value: "50.00" },
      { name: "Field of view", value: "39" },
      { name: "Height", value: "17251.67", muted: true },
      { name: "Width", value: "33878.02", muted: true },
      { name: "Clipping", value: "Off" },
      { name: "Front plane", value: "0.00" },
      { name: "Back plane", value: "0.00" },
      { name: "Visual Style", value: "Bim" },
    ],
  },
  {
    title: "Misc",
    rows: [
      { name: "Annotation scale", value: "1:1" },
      { name: "Default Lighting", value: "On" },
    ],
  },
];

const STATUS_FIELDS = [
  { label: "Standard", width: "w-[53px]" },
  { label: "ISO", width: "w-[27px]" },
  { label: "BIM", width: "w-[27px]" },
  { label: "SNAP", width: "w-[37px]", off: true },
  { label: "GRID", width: "w-[36px]", off: true },
  { label: "ORTHO", width: "w-[45px]", off: true },
  { label: "POLAR", width: "w-[42px]" },
  { label: "ESNAP", width: "w-[41px]" },
  { label: "STRACK", width: "w-[48px]" },
  { label: "LWT", width: "w-[30px]", off: true },
  { label: "TILE", width: "w-[30px]" },
  { label: "DUCS", width: "w-[36px]" },
  { label: "DYN", width: "w-[29px]" },
  { label: "QUAD", width: "w-[38px]" },
  { label: "TIPS", width: "w-[31px]" },
  { label: "", width: "w-[10px]" },
];

function ToolButton({ name, active }) {
  return (
    <button type="button" aria-label={name} className={active ? "shrink-0 bg-[#a5c8f0]" : "shrink-0"}>
      <Glyph name={name} />
    </button>
  );
}

function ToolRow({ groups, active }) {
  return groups.map((group, i) => (
    <div key={i} className="flex shrink-0">
      {i > 0 && <span className="ml-[3px] mr-1 h-[18px] w-px self-center bg-[#848284]" />}
      {group.map((name) => (
        <ToolButton key={name} name={name} active={name === active} />
      ))}
    </div>
  ));
}

function ToolColumn({ groups }) {
  return (
    <div className="flex flex-col items-center pt-[3px]">
      {groups.map((group, i) => (
        <div key={i} className="flex flex-col items-center">
          {i > 0 && <span className="mb-[5px] mt-[2px] h-px w-[19px] bg-[#848284]" />}
          {group.map((name) => (
            <ToolButton key={name} name={name} />
          ))}
        </div>
      ))}
    </div>
  );
}

// dotted handle that starts every dockable bar
function RowGrip({ className }) {
  return (
    <div className={`flex h-[28px] shrink-0 items-center justify-center self-center bg-[#c5cdcd] ${className}`}>
      <span className="h-[18px] w-0 border-l-2 border-dotted border-[#f4f4f4]" />
    </div>
  );
}

function ColumnGrip({ children }) {
  return (
    <div className="flex h-3 shrink-0 items-center border-t border-[#a5a2a5] bg-[#c5cdcd]">
      <span className="mx-auto w-[18px] border-t-2 border-dotted border-[#f4f4f4]" />
      {children}
    </div>
  );
}

function Chevron() {
  return (
    <svg width="10" height="6" viewBox="0 0 10 6" fill="none" stroke="#4a464a" strokeWidth="1.200">
      <path d="M1 1l4 4 4-4" />
    </svg>
  );
}

function Combo({ label, value, className, children, tint }) {
  return (
    <div className={`flex shrink-0 items-center border border-[#848673] px-[2px] ${tint ? "bg-[#e7e7de]" : "bg-white"} ${className}`}>
      {children}
      <select aria-label={label} defaultValue={value} className="h-full min-w-0 flex-1 appearance-none bg-transparent outline-none">
        <option>{value}</option>
      </select>
      <Chevron />
    </div>
  );
}

function Logo({ onPage }) {
  return (
    <svg width="15" height="16" viewBox="0 0 15 16" className="block">
      {onPage && <path d="M0 1h10l5 4v11H0z" fill="#5a98dc" />}
      {onPage && <path d="M10 1l5 4h-5z" fill="#b8d4f0" />}
      <g transform={onPage ? "translate(2.500 4) scale(.7)" : "translate(0 1)"} fill={onPage ? "#fff" : "#2f86e0"}>
        <path d="M3 0h4v5l4 4-2 4-4.500-5z" />
        <path d="M0 13l5-3 2 2-3 2z" />
        <path d="M9 5c5 0 6 5 3 7.500L8.500 14l2-3c1-2 1-3-2-3z" />
      </g>
    </svg>
  );
}

function TitleBar() {
  return (
    <header className="flex h-[29px] items-center pl-[9px] font-['Open_Sans','Noto_Sans',sans-serif] text-xs text-[#9c9690]">
      <Logo />
      <h1 className="ml-[5px] flex-1">BricsCAD Platinum beta - [Drawing1]</h1>
      <div className="flex gap-[23px] pr-3">
        {["M6 11.500h11", "M6.500 6.500h9v9h-9z", "M6 6l10 10M16 6L6 16"].map((d, i) => (
          <button key={d} type="button" aria-label={["Minimize", "Maximize", "Close"][i]}>
            <svg width="22" height="22" viewBox="0 0 22 22" fill="none" stroke="#6e6a72">
              <path d={d} />
            </svg>
          </button>
        ))}
      </div>
    </header>
  );
}

function MenuBar() {
  return (
    <nav className="flex h-[22px] items-center border-b border-[#a5a2a5] pl-[9px] font-['Open_Sans','Noto_Sans',sans-serif] text-xs text-[#5a5450]">
      <Logo onPage />
      <div className="ml-[6px] flex flex-1 gap-3">
        {MENUS.map((menu) => (
          <button key={menu} type="button">
            {menu}
          </button>
        ))}
      </div>
      <div className="mr-px flex gap-px">
        {["M5 11h6v2H5z", "M7 4h7v5h-2v-3H7zM4 8h7v5H4zm1.500 2v1.500h4V10z", "M5 4l3 3 3-3 2 2-3 3 3 3-2 2-3-3-3 3-2-2 3-3-3-3z"].map((d, i) => (
          <button key={d} type="button" aria-label={["Minimize drawing", "Restore drawing", "Close drawing"][i]} className="bg-[#e7e7de]">
            <svg width="18" height="18" viewBox="0 0 18 18" fill="#84a09c" fillRule="evenodd">
              <path d={d} transform="translate(1 1) scale(.9)" />
            </svg>
          </button>
        ))}
      </div>
    </nav>
  );
}

function LayerStateIcons() {
  return (
    <svg width="86" height="18" viewBox="0 0 86 18" fill="none" stroke={INK} className="mr-1 shrink-0">
      <path d="M3.500 10a4.500 4.500 0 1 1 4 0v3h-4z" fill="#ffe080" stroke="#d09820" />
      <path d="M3.500 14.500h4M4 16.500h3" strokeWidth="1.200" />
      <g stroke="#e8a020">
        <circle cx="24" cy="9" r="4" fill="#ffd850" />
        <path d="M24 1.500v2M24 14.500v2M16.500 9h2M29.500 9h2M18.500 3.500l1.500 1.500M29.500 3.500L28 5M18.500 14.500l1.500-1.500M29.500 14.500L28 13" strokeWidth="1.500" />
      </g>
      <path d="M35.500 7c-1-5 7-5 7 0" strokeWidth="1.800" />
      <path d="M38.500 7.500h10v8h-10z" fill="#e0b060" stroke="#886030" />
      <path d="M39 10h9M39 13h9" stroke="#a87838" />
      <g transform="translate(49 -2)">
        <Printer />
      </g>
      <path d="M72 2h14v14H72z" fill="#000" stroke="none" />
    </svg>
  );
}

function Toolbars() {
  return (
    <>
      <div className="flex h-[31px] items-center overflow-hidden border-b border-[#a5a2a5]">
        <RowGrip className="mr-[3px] w-[10px]" />
        <ToolRow groups={DRAWING_TOOLS} active="edit" />
        <RowGrip className="ml-[7px] mr-[3px] w-3" />
        <Combo label="Workspace" value="BIM" className="mr-[7px] h-5 w-[125px]" />
        <RowGrip className="mr-[3px] w-3" />
        <ToolRow groups={VIEW_TOOLS} />
        <RowGrip className="ml-[6px] mr-[3px] w-3" />
        <ToolRow groups={LAYER_TOOLS} />
      </div>
      <div className="flex h-[30px] items-center overflow-hidden">
        <RowGrip className="mr-[3px] w-[10px]" />
        <ToolButton name="layersDrop" />
        <Combo label="Layer" value="0" className="mx-px h-5 w-[300px]">
          <LayerStateIcons />
        </Combo>
        <ToolRow groups={[["layerCheck", "layerFreeze"], []]} />
        <Combo label="Color" value="ByLayer" className="ml-px mr-[2px] h-5 w-[127px]">
          <span className="ml-[3px] mr-[5px] size-[14px] border border-black bg-white" />
        </Combo>
        <Combo label="Linetype" value="ByLayer" className="mr-[2px] h-5 w-[159px]">
          <span className="ml-1 mr-1 h-px w-[50px] bg-black" />
        </Combo>
        <Combo label="Lineweight" value="ByLayer" className="mr-[7px] h-5 w-[149px]">
          <span className="ml-[3px] mr-1 h-px w-10 bg-black" />
        </Combo>
        <RowGrip className="mr-[3px] w-3" />
        <ToolRow groups={SNAP_TOOLS} active="snapMid" />
      </div>
    </>
  );
}

function Canvas() {
  return (
    <svg className="absolute inset-0 h-full w-full" fill="none">
      {/* origin moved so that geometry reads in window coordinates */}
      <g transform="translate(-70 -133)">
        <path d="M470 143L757 309 610 394 322 228z" fill="#efefef" />
        <path d="M322 228L610 394V581L322 415z" fill="#c6cfce" />
        <path d="M610 394L757 309V496L610 581z" fill="#84828c" />
        <g stroke="#000" shapeRendering="crispEdges">
          <path d="M322 228L610 394L757 309M609.500 394V581" />
          <path d="M470 143L757 309V496L610 581 322 415V228z" strokeWidth="1.500" />
        </g>

        <circle cx="941" cy="182.500" r="38" stroke="#c2c4c0" />
        <path
          d="M938 150h6l-3 5zM938 215h6l-3-5zM908 180v6l5-3zM973 180v6l-5-3zM916 162l4-4v5zM965 162l-5-4v5zM916 203l4 4v-5zM965 203l-5 4v-5z"
          fill="#b4b4ac"
        />

        <path d="M931 541V510" stroke="#28609c" strokeWidth="1.500" />
        <path d="M931 505l3 9h-6z" fill="#28609c" />
        <path d="M931 541L905 527" stroke="#28b878" />
        <path d="M899 524l8 0-3 6z" fill="#108858" />
        <path d="M931 541L957 526" stroke="#c88080" />
        <path d="M963 523l-8 1 3 5z" fill="#a85858" />

        <g shapeRendering="crispEdges">
          <path d="M605.500 558v27" stroke="#28a8c0" />
          <path d="M605.500 585v17" stroke="#0878e8" />
          <path d="M577 573l42 24" stroke="#00e878" />
          <path d="M634 573l-42 24" stroke="#f07070" />
          <path d="M601.500 585.500h8v8h-8z" stroke="#000" />
        </g>

        <path d="M191.500 364.500v15l3.500-3.500 3 6 2-1-3-6h4.500z" fill="#fff" stroke="#000" />
      </g>
    </svg>
  );
}

const NAV_ARROWS = {
  First: "M2 3h1.500v10H2zM10 3v10L5 8z",
  Previous: "M10 3v10L5 8z",
  Next: "M6 3v10l5-5z",
  Last: "M5 3v10l5-5zM11 3h1.500v10H11z",
};

function Workspace() {
  const [layout, setLayout] = useState("Model");

  return (
    <main className="flex min-w-0 flex-1 flex-col">
      <div className="flex h-[18px] shrink-0">
        <div className="flex w-[101px] items-center justify-between border-x border-t border-black pl-[10px] pr-[11px] font-bold">
          <span>Drawing1*</span>
          <button type="button" aria-label="Close tab">
            <svg width="9" height="9" viewBox="0 0 9 9" stroke="#000" strokeWidth="2">
              <path d="M.5.5l8 8M8.500.5l-8 8" />
            </svg>
          </button>
        </div>
        <div className="flex-1 border-b border-black" />
      </div>
      <div className="relative min-h-0 flex-1 border-l-2 border-r border-t-2 border-l-[#84828c] border-r-[#e7e7de] border-t-[#84828c] bg-white">
        <Canvas />
      </div>
      <div className="flex h-[17px] shrink-0 bg-[#f7f7f7] pl-[3px]">
        {Object.entries(NAV_ARROWS).map(([name, d]) => (
          <button key={name} type="button" aria-label={name} className="w-[17px] border-b border-r-2 border-[#a5a2a5] bg-[#fafafa]">
            <svg width="15" height="15" viewBox="0 0 15 15" fill="#000" className="block">
              <path d={d} />
            </svg>
          </button>
        ))}
        {["Model", "Layout1", "Layout2"].map((tab) => (
          <button
            key={tab}
            type="button"
            onClick={() => setLayout(tab)}
            className={
              tab === layout
                ? "w-[39px] border-r border-black bg-white pt-[2px] text-center leading-[15px] font-bold"
                : "w-[52px] border-b border-r border-t border-r-[#848284] border-b-[#a5a2a5] border-t-black pt-px text-center leading-[14px]"
            }
          >
            {tab}
          </button>
        ))}
        <div className="flex-1 border-t border-black" />
      </div>
      <CommandLine />
    </main>
  );
}

function CommandLine() {
  return (
    <section className="mt-[2px] flex h-[70px] shrink-0 font-['DejaVu_Sans_Mono','Liberation_Mono',monospace] text-[12px] leading-[15px] text-[#3a3438]">
      <div className="flex w-[10px] flex-col items-center gap-5 bg-[#c5cdcd] pt-1">
        <button type="button" aria-label="Close command line">
          <svg width="7" height="7" viewBox="0 0 7 7" stroke="#5a5660" strokeWidth="1.800" className="block">
            <path d="M.5.5l6 6M6.500.5l-6 6" />
          </svg>
        </button>
        <span className="h-[18px] border-l-2 border-dotted border-[#f4f4f4]" />
      </div>
      <div className="flex min-w-0 flex-1 flex-col">
        <div className="flex h-[51px] pl-[5px] pt-[7px]">
          <div className="mb-1 flex min-w-0 flex-1 flex-col justify-end overflow-hidden whitespace-pre">
            <p>: _circle</p>
            <p>2Point/3Point/TanTanRad/Arc/Multiple/&lt;Center of circle&gt;:</p>
            <p>Cancel</p>
          </div>
          <div className="mr-[5px] flex h-[39px] w-[14px] flex-col items-center justify-between bg-[#f7f7f7] py-[5px]">
            {["M1 6l3.500-3.500L8 6", "M1 2l3.500 3.500L8 2"].map((d, i) => (
              <button key={d} type="button" aria-label={i ? "Scroll down" : "Scroll up"}>
                <svg width="9" height="8" viewBox="0 0 9 8" fill="none" stroke="#5a5660" strokeWidth="2" className="block">
                  <path d={d} />
                </svg>
              </button>
            ))}
          </div>
        </div>
        <label className="flex flex-1 items-center border-l border-t border-[#a5a2a5] pl-[6px] font-bold">
          :
          <input aria-label="Command" className="ml-1 min-w-0 flex-1 outline-none" />
        </label>
      </div>
    </section>
  );
}

function TreeBox({ open, label, onClick }) {
  return (
    <button type="button" aria-label={label} onClick={onClick} className="mx-auto block">
      <svg width="9" height="9" viewBox="0 0 9 9" fill="#fff" stroke="#000" className="block">
        <path d={open ? "M.5.5h8v8h-8zM2 4.500h5" : "M.5.5h8v8h-8zM2 4.500h5M4.500 2v5"} />
      </svg>
    </button>
  );
}

function PropertiesPanel() {
  const [closed, setClosed] = useState([]);
  const toggle = (title) => setClosed((list) => (list.includes(title) ? list.filter((t) => t !== title) : [...list, title]));

  return (
    <aside className="flex w-[250px] shrink-0 flex-col">
      <ColumnGrip>
        <button type="button" aria-label="Close properties" className="mr-[2px]">
          <svg width="8" height="8" viewBox="0 0 8 8" stroke="#5a5660" strokeWidth="2" className="block">
            <path d="M.5.5l7 7M7.500.5l-7 7" />
          </svg>
        </button>
      </ColumnGrip>
      <div className="flex min-h-0 flex-1 flex-col border-l border-[#848284] bg-[#fbfbfb] pl-1">
        <div className="flex h-[30px] items-center pl-[3px]">
          <Combo label="Selection" value="No Selection" className="h-[23px] w-[217px]" tint />
          <button type="button" aria-label="Filter" className="ml-px">
            <svg width="22" height="22" viewBox="0 0 22 22" fill="none" stroke={INK}>
              <path d="M3.500 5.500l5 5v8l4-2v-6l5-5z" fill="#c8cac8" />
              <ellipse cx="10.500" cy="4.500" rx="7" ry="1.800" fill="#f0f0f0" />
              <Bolt />
            </svg>
          </button>
        </div>
        <div className="mb-[2px] min-h-0 flex-1 border-b border-l border-t border-[#a5a2a5] bg-white">
          <table className="w-full table-fixed border-separate border-spacing-0 text-left">
            <colgroup>
              <col className="w-4" />
              <col className="w-[86px]" />
              <col />
            </colgroup>
            {PROPERTIES.map((section) => (
              <tbody key={section.title}>
                <tr className="h-[18px]">
                  <td className="p-0">
                    <TreeBox open={!closed.includes(section.title)} label={section.title} onClick={() => toggle(section.title)} />
                  </td>
                  <th colSpan={2} className="h-[18px] border-b border-[#a5a2a5] bg-[#318ee7] p-0 pt-[2px] pl-1 text-[12px] leading-[15px] font-bold text-white">
                    {section.title}
                  </th>
                </tr>
                {!closed.includes(section.title) &&
                  section.rows.map((row) => (
                    <tr key={row.name} className="h-[18px]">
                      <td className="p-0">{row.expand && <TreeBox label={row.name} />}</td>
                      <th className="h-[18px] overflow-hidden border-x border-b border-[#a5a2a5] p-0 pt-[2px] pl-[3px] leading-[15px] font-normal whitespace-nowrap">
                        {row.name}
                      </th>
                      <td className={`border-b border-[#a5a2a5] p-0 pt-[2px] pl-1 leading-[15px] ${row.muted ? "text-[#7b797b]" : ""}`}>
                        <div className="flex items-center">
                          {row.swatch && <span className="ml-[2px] mr-[5px] size-[13px] border border-black" />}
                          {row.line && <span className={`ml-[3px] mr-1 h-px bg-black ${row.line}`} />}
                          {row.value}
                        </div>
                      </td>
                    </tr>
                  ))}
              </tbody>
            ))}
          </table>
        </div>
      </div>
    </aside>
  );
}

function StatusBar() {
  return (
    <footer className="flex h-[22px] shrink-0 items-stretch border-t border-[#a5a2a5] bg-[#f7f7f7] pt-[3px] pb-px leading-[18px]">
      <span className="pl-px font-['Noto_Sans',sans-serif] text-[12px]">Ready</span>
      <span className="flex-1 pr-[5px] text-right">5856.33, 1684.22, 0.00</span>
      {STATUS_FIELDS.map((field) => (
        <button
          key={field.label}
          type="button"
          aria-label={field.label || "Spare field"}
          className={`shrink-0 border-l border-[#c5cdcd] pr-[2px] text-center whitespace-nowrap ${field.width} ${field.off ? "text-[#7b797b]" : ""}`}
        >
          {field.label}
        </button>
      ))}
      <button type="button" aria-label="Status bar menu" className="flex w-[60px] shrink-0 items-center justify-between border-l border-[#c5cdcd] pl-[3px]">
        <svg width="9" height="6" viewBox="0 0 9 6">
          <path d="M1 1h7L4.500 5z" />
        </svg>
        <svg width="11" height="11" viewBox="0 0 11 11" fill="#b4b0b0" className="self-end">
          <path d="M7 0h2v2H7zM4 3h2v2H4zM7 3h2v2H7zM1 6h2v2H1zM4 6h2v2H4zM7 6h2v2H7z" />
        </svg>
      </button>
    </footer>
  );
}

export default function App() {
  return (
    <div className="flex h-screen flex-col overflow-hidden bg-[#7d8494] font-['DejaVu_Sans_Condensed','Roboto',sans-serif] text-[11px] text-black">
      <div className="h-px bg-linear-to-r from-[#4a7a94] via-[#9a8c90] to-[#6b7484]" />
      <div className="flex min-h-0 flex-1">
        <div className="w-2 shrink-0 bg-linear-to-b from-[#5a9cac] from-15% via-[#3a6088] via-50% to-[#2c4058]" />
        <div className="flex min-w-0 flex-1 flex-col bg-white">
          <TitleBar />
          <MenuBar />
          <Toolbars />
          <div className="flex min-h-0 flex-1">
            <div className="flex w-[30px] shrink-0 flex-col overflow-hidden border-r border-[#848284]">
              <ColumnGrip />
              <ToolColumn groups={DRAW_TOOLS} />
              <div className="h-[6px] shrink-0" />
              <ColumnGrip />
              <ToolColumn groups={ORDER_TOOLS} />
            </div>
            <div className="flex w-[30px] shrink-0 flex-col overflow-hidden">
              <ColumnGrip />
              <ToolColumn groups={SOLID_TOOLS} />
              <div className="h-[6px] shrink-0" />
              <ColumnGrip />
              <ToolColumn groups={BIM_TOOLS} />
            </div>
            <Workspace />
            <div className="flex w-[29px] shrink-0 flex-col overflow-hidden">
              <ColumnGrip />
              <ToolColumn groups={MODIFY_TOOLS} />
            </div>
            <PropertiesPanel />
          </div>
          <StatusBar />
        </div>
        <div className="w-2 shrink-0 overflow-hidden bg-linear-to-b from-[#3c7098] from-10% via-[#30588c] via-60% to-[#7c8084] to-85% pt-[162px] leading-[15px] text-white">
          <p>Ca</p>
          <p>ol</p>
          <div className="mt-3 h-10 bg-[#20242c]" />
          <p className="mt-[7px] whitespace-nowrap">y P</p>
        </div>
      </div>
      <div className="h-[7px] bg-linear-to-r from-[#3c4c68] via-[#98a0ac] to-[#a8a4a4]" />
    </div>
  );
}
